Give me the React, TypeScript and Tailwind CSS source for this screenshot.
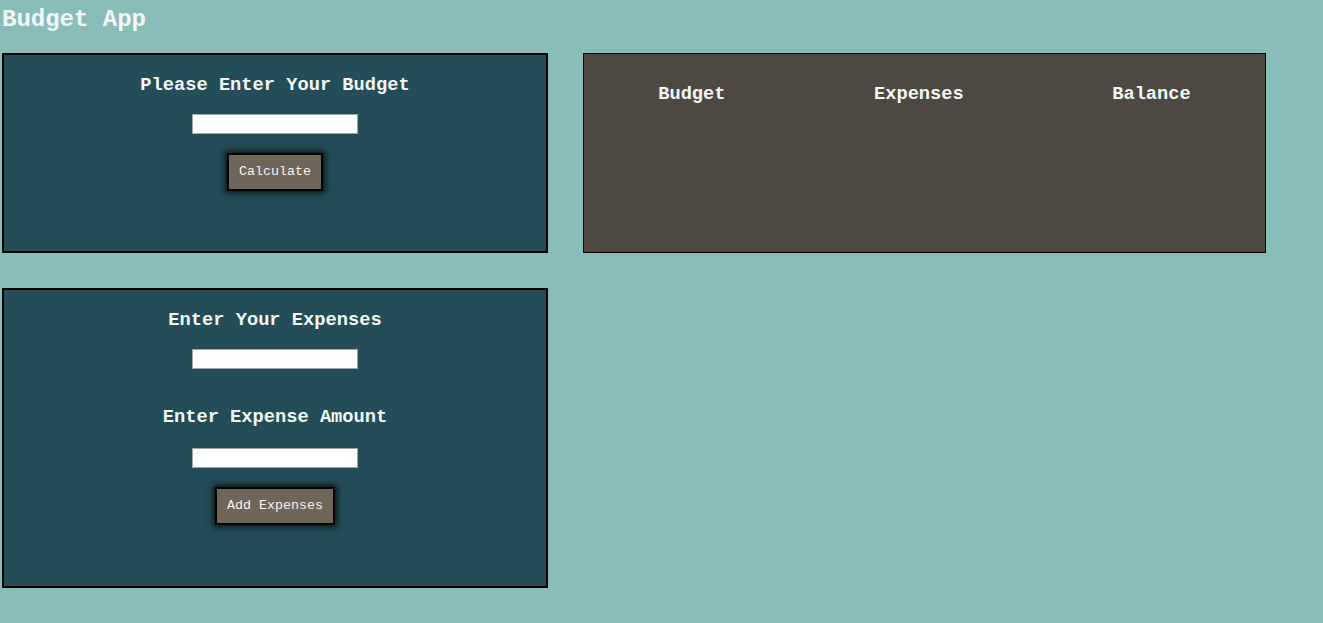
import React from "react";

const font = { fontFamily: '"Liberation Mono", "Courier New", monospace' };

function Btn({ children, className = "" }: { children: React.ReactNode; className?: string }) {
  return (
    <button
      className={`block h-[38px] px-[10px] border-2 border-black bg-[#6f6659] text-[#f4f4f0] text-[13.33px] leading-none shadow-[0_0_6px_2px_rgba(0,0,0,0.75)] ${className}`}
      style={font}
    >
      {children}
    </button>
  );
}

function Field({ className = "" }: { className?: string }) {
  return <input type="text" className={`block w-[166px] h-[20px] bg-white border border-[#9aa5a8] outline-none ${className}`} />;
}

function H({ children, className = "" }: { children: React.ReactNode; className?: string }) {
  return <h3 className={`text-[18.72px] leading-[21px] font-bold text-[#f2f8f8] ${className}`}>{children}</h3>;
}

export default function App() {
  return (
    <div className="min-h-[623px] w-full bg-[#89bdba] pl-[2px] pt-[6px]" style={font}>
      <h1 className="text-[24px] leading-[27px] font-bold text-[#f2f8f6]">Budget App</h1>
      <div className="mt-[20px] flex items-start gap-[35px]">
        <div className="flex w-[546px] flex-col gap-[35px]">
          <section className="flex h-[200px] flex-col items-center border-2 border-black bg-[#244d57] pt-[19.5px]">
            <H>Please Enter Your Budget</H>
            <Field className="mt-[18.5px]" />
            <Btn className="mt-[19px]">Calculate</Btn>
          </section>
          <section className="flex h-[300px] flex-col items-center border-2 border-black bg-[#244d57] pt-[19.5px]">
            <H>Enter Your Expenses</H>
            <Field className="mt-[18.5px]" />
            <H className="mt-[37.5px]">Enter Expense Amount</H>
            <Field className="mt-[20.5px]" />
            <Btn className="mt-[19px]">Add Expenses</Btn>
          </section>
        </div>
        <section className="flex h-[200px] w-[683px] items-start justify-around border border-black bg-[#4d4942] pt-[30px]">
          <H>Budget</H>
          <H>Expenses</H>
          <H>Balance</H>
        </section>
      </div>
    </div>
  );
}
